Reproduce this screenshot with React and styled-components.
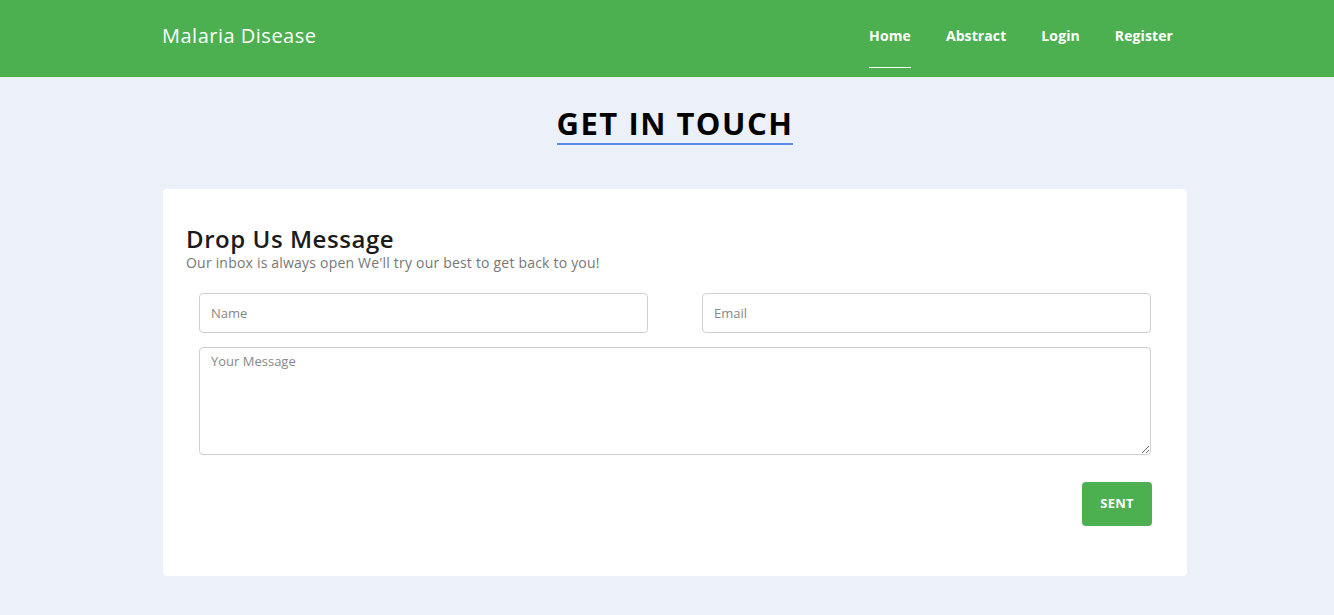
import React from "react";
import styled, { createGlobalStyle } from "styled-components";

const Global = createGlobalStyle`
  html, body { margin: 0; padding: 0; }
  body {
    background: #ecf0f8;
    font-family: "Open Sans", "Liberation Sans", sans-serif;
    color: #212529;
  }
  * { box-sizing: border-box; }
`;

const Page = styled.div`
  padding-left: 16px;
`;

const Header = styled.header`
  background: #4caf50;
  height: 77px;
  margin-left: -16px;
  padding-left: 16px;
`;

const HeaderInner = styled.div`
  width: 1024px;
  margin: 0 auto;
  height: 100%;
  display: flex;
  align-items: center;
  justify-content: space-between;
`;

const Brand = styled.a`
  color: #fff;
  font-size: 20px;
  font-weight: 500;
  letter-spacing: 0.5px;
  text-decoration: none;
  margin-left: -1px;
  margin-top: -7px;
`;

const Nav = styled.nav`
  display: flex;
  gap: 35px;
  height: 100%;
  margin-right: 14px;
`;

const NavLink = styled.a`
  position: relative;
  display: flex;
  align-items: center;
  color: #fff;
  font-size: 14px;
  font-weight: 700;
  letter-spacing: 0.1px;
  text-decoration: none;
  padding-bottom: 7px;
  &::after {
    content: "";
    position: absolute;
    left: 0;
    right: 0;
    top: 67px;
    height: 1px;
    background: ${(p) => (p.$active ? "#fff" : "transparent")};
  }
`;

const Main = styled.main`
  width: 1024px;
  margin: 0 auto;
  display: flex;
  flex-direction: column;
  align-items: center;
`;

const Title = styled.h1`
  margin: 27px 0 44px;
  font-size: 31px;
  font-weight: 700;
  color: #000;
  letter-spacing: 1.5px;
  line-height: 38px;
  padding-bottom: 1px;
  border-bottom: 2px solid #5b8de6;
`;

const Card = styled.section`
  align-self: stretch;
  background: #fff;
  border-radius: 4px;
  padding: 35px 36px 50px 23px;
`;

const CardTitle = styled.h2`
  margin: 0;
  font-size: 24px;
  font-weight: 600;
  letter-spacing: 0.55px;
  color: #1b1b1b;
  line-height: 30px;
`;

const CardSub = styled.p`
  margin: 0 0 21px;
  font-size: 14px;
  letter-spacing: 0.2px;
  color: #777;
  line-height: 18px;
`;

const Form = styled.form`
  padding-left: 13px;
  display: flex;
  flex-direction: column;
`;

const Row = styled.div`
  display: grid;
  grid-template-columns: 1fr 1fr;
  column-gap: 54px;
  margin-bottom: 14px;
`;

const Input = styled.input`
  height: 40px;
  border: 1px solid #cdd0d6;
  border-radius: 4px;
  padding: 0 11px;
  font-family: inherit;
  font-size: 13px;
  color: #333;
  &::placeholder { color: #888; }
`;

const TextArea = styled.textarea`
  height: 108px;
  border: 1px solid #cdd0d6;
  border-radius: 4px;
  padding: 4px 11px;
  font-family: inherit;
  font-size: 13px;
  resize: vertical;
  &::placeholder { color: #888; }
`;

const Actions = styled.div`
  display: flex;
  justify-content: flex-end;
  margin-top: 27px;
  margin-right: -1px;
`;

const Button = styled.button`
  width: 70px;
  height: 44px;
  background: #4caf50;
  color: #fff;
  border: none;
  border-radius: 4px;
  padding: 0 0 2px;
  font-family: inherit;
  font-size: 13px;
  font-weight: 700;
  letter-spacing: 0.2px;
`;

export default function App() {
  return (
    <Page>
      <Global />
      <Header>
        <HeaderInner>
          <Brand href="#">Malaria Disease</Brand>
          <Nav>
            <NavLink href="#" $active>Home</NavLink>
            <NavLink href="#">Abstract</NavLink>
            <NavLink href="#">Login</NavLink>
            <NavLink href="#">Register</NavLink>
          </Nav>
        </HeaderInner>
      </Header>
      <Main>
        <Title>GET IN TOUCH</Title>
        <Card>
          <CardTitle>Drop Us Message</CardTitle>
          <CardSub>Our inbox is always open We'll try our best to get back to you!</CardSub>
          <Form onSubmit={(e) => e.preventDefault()}>
            <Row>
              <Input placeholder="Name" />
              <Input placeholder="Email" />
            </Row>
            <TextArea placeholder="Your Message" />
            <Actions>
              <Button type="submit">SENT</Button>
            </Actions>
          </Form>
        </Card>
      </Main>
    </Page>
  );
}
